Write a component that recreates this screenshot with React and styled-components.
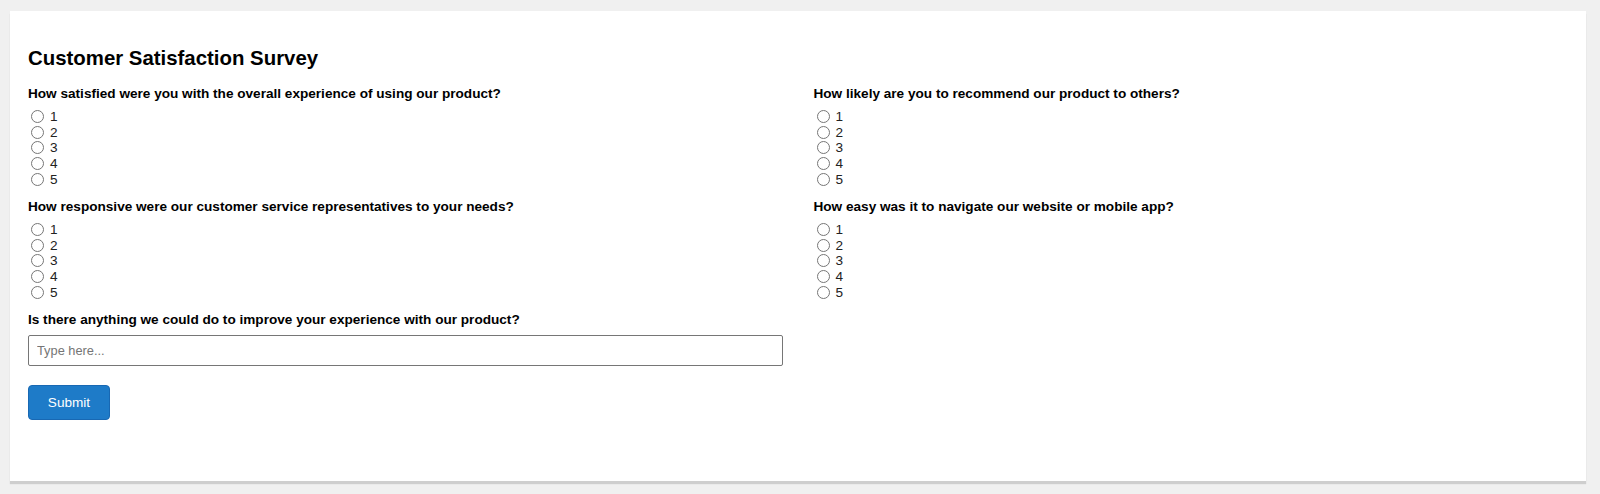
import React from 'react';
import styled, { createGlobalStyle } from 'styled-components';

const GlobalStyle = createGlobalStyle`
    html, body {
        margin: 0;
        padding: 0;
        background: #f0f0f0;
        font-family: 'Liberation Sans', Arial, sans-serif;
        color: #111;
    }
`;

const Page = styled.div`
    padding: 11px 14px 9px 10px;
`;

const Card = styled.form`
    background: #ffffff;
    padding: 36px 18px 61px 18px;
    font-size: 13.6px;
    box-shadow: 0 3px 1px rgba(0, 0, 0, 0.14);
`;

const Title = styled.h2`
    margin: 0 0 16px 0;
    font-size: 20.4px;
    line-height: 23px;
    font-weight: 700;
    color: #000;
`;

const QuestionGrid = styled.div`
    display: grid;
    grid-template-columns: 1fr 1fr;
    column-gap: 31px;
    row-gap: 12px;
`;

const Question = styled.div`
    display: flex;
    flex-direction: column;
    gap: ${props => props.gap || 7}px;
`;

const QuestionText = styled.label`
    font-size: 13.6px;
    line-height: 16px;
    font-weight: 700;
    color: #000;
`;

const Options = styled.div`
    display: flex;
    flex-direction: column;
`;

const Option = styled.label`
    display: flex;
    align-items: center;
    height: 15.6px;
    font-size: 13.6px;
    color: #222;
`;

const Radio = styled.input`
    width: 13px;
    height: 13px;
    margin: 0 6px 0 3px;
`;

const TextInput = styled.input`
    box-sizing: border-box;
    width: 100%;
    height: 31px;
    padding: 0 8px;
    border: 1px solid #767676;
    border-radius: 2px;
    font-family: 'Liberation Sans', Arial, sans-serif;
    font-size: 12.8px;
    color: #111;
    outline: none;

    &::placeholder {
        color: #757575;
    }
`;

const SubmitButton = styled.button`
    margin-top: 19px;
    height: 35px;
    width: 82px;
    padding: 0;
    border: 1px solid #1868b3;
    border-radius: 4px;
    background: #1e7bc8;
    color: #ffffff;
    font-family: 'Liberation Sans', Arial, sans-serif;
    font-size: 13.6px;
    cursor: pointer;
`;

const questions = [
    { id: 'q1', text: 'How satisfied were you with the overall experience of using our product?' },
    { id: 'q3', text: 'How likely are you to recommend our product to others?' },
    { id: 'q2', text: 'How responsive were our customer service representatives to your needs?' },
    { id: 'q4', text: 'How easy was it to navigate our website or mobile app?' }
];

const RatingQuestion = ({ id, text }) => (
    <Question>
        <QuestionText>{text}</QuestionText>
        <Options>
            {[1, 2, 3, 4, 5].map(n => (
                <Option key={n}>
                    <Radio type='radio' name={id} value={n} />
                    {n}
                </Option>
            ))}
        </Options>
    </Question>
);

const App = () => (
    <Page>
        <GlobalStyle />
        <Card onSubmit={e => e.preventDefault()}>
            <Title>Customer Satisfaction Survey</Title>
            <QuestionGrid>
                {questions.map(q => (
                    <RatingQuestion key={q.id} id={q.id} text={q.text} />
                ))}
                <Question gap={7}>
                    <QuestionText htmlFor='improve'>
                        Is there anything we could do to improve your experience with our product?
                    </QuestionText>
                    <TextInput id='improve' type='text' placeholder='Type here...' />
                </Question>
            </QuestionGrid>
            <SubmitButton type='submit'>Submit</SubmitButton>
        </Card>
    </Page>
);

export default App;
